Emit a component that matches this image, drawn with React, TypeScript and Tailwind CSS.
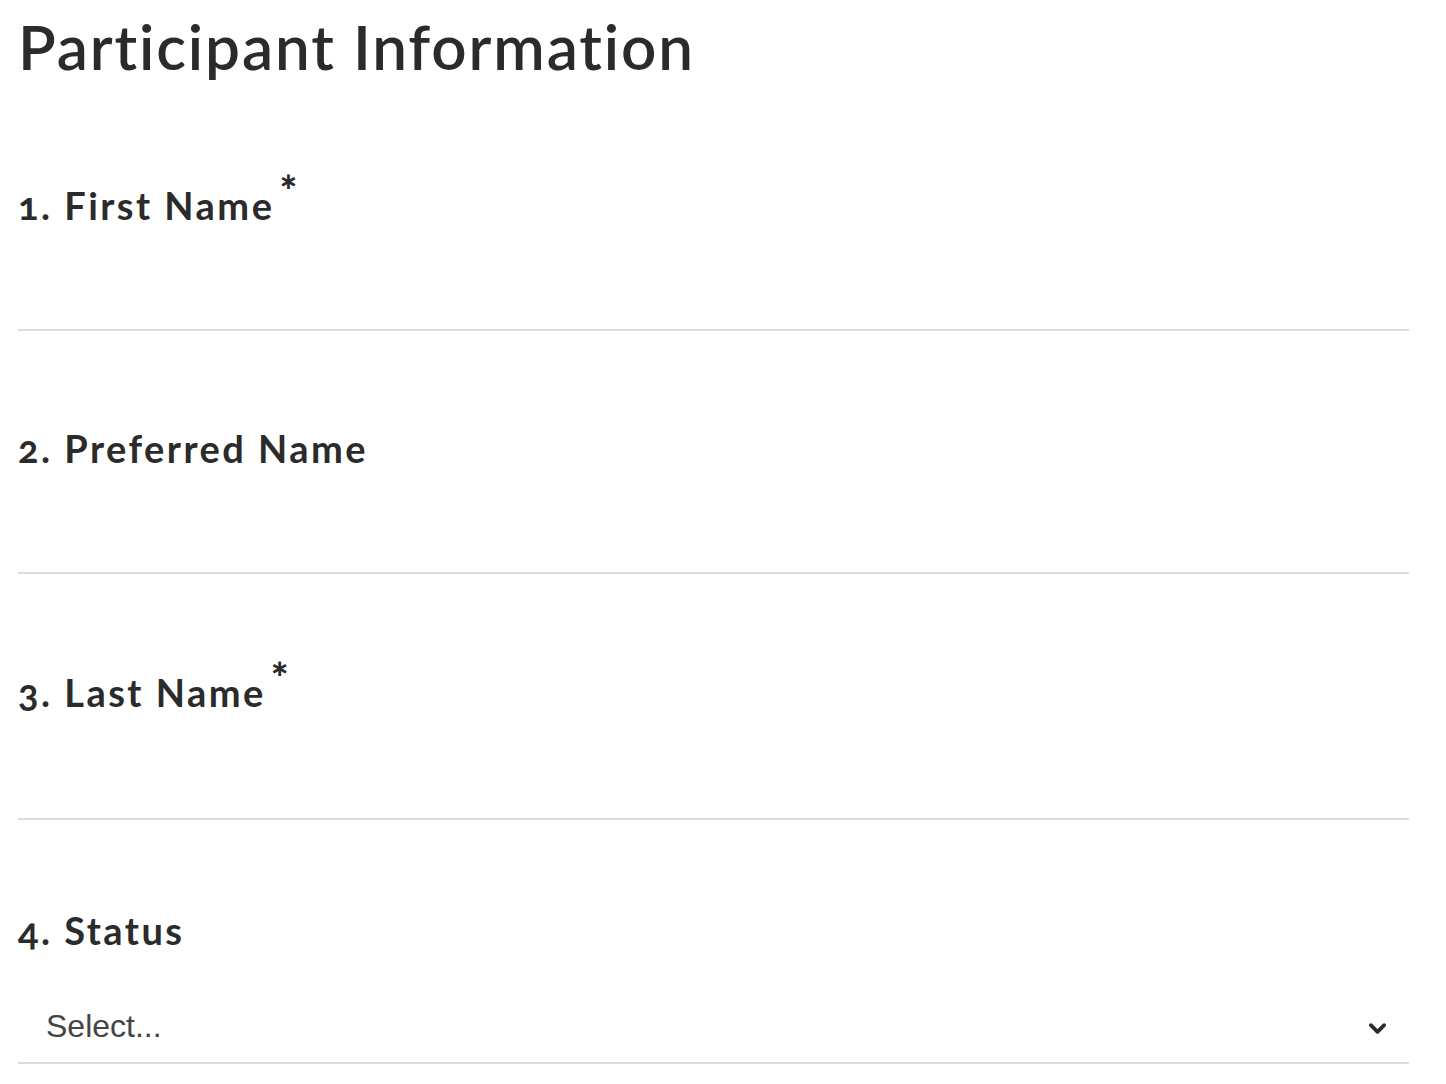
import React from 'react'

interface FieldProps {
  number: number
  label: string
  required?: boolean
  className?: string
  children?: React.ReactNode
}

const Field: React.FC<FieldProps> = ({ number, label, required, className, children }) => (
  <div className={className}>
    <label className="block text-[38px] leading-[48px] font-bold tracking-[0.065em] text-[#2b2b2b] oldstyle-nums">
      {number}. {label}
      {required && (
        <span className="relative -top-[12px] ml-[5px] align-top text-[42px] font-black leading-none tracking-normal">
          *
        </span>
      )}
    </label>
    {children}
  </div>
)

const TextLine: React.FC<{ height: string }> = ({ height }) => (
  <div className={`${height} border-b-2 border-[#dddddd]`} />
)

const App: React.FC = () => {
  return (
    <div className="min-h-[1084px] bg-white pl-[18px] pr-[37px] pt-[15px] font-['Lato',sans-serif]">
      <h1 className="text-[62px] leading-[62px] font-semibold tracking-[0.03em] text-[#2b2b2b]">
        Participant Information
      </h1>

      <Field number={1} label="First Name" required className="pt-[104px]">
        <TextLine height="h-[102px]" />
      </Field>
      <Field number={2} label="Preferred Name" className="pt-[93px]">
        <TextLine height="h-[102px]" />
      </Field>
      <Field number={3} label="Last Name" required className="pt-[94px]">
        <TextLine height="h-[104px]" />
      </Field>
      <Field number={4} label="Status" className="pt-[86px]">
        <div className="flex h-[110px] items-start justify-between border-b-2 border-[#dddddd] pl-[28px] pr-[22px] pt-[54px]">
          <span className="font-['Liberation_Sans',sans-serif] text-[32px] leading-[36px] text-[#444444]">
            Select...
          </span>
          <svg viewBox="0 0 20 13" className="mt-[14px] h-[13px] w-[19px]" fill="none">
            <path
              d="M3 3l7 7 7-7"
              stroke="#2b2b2b"
              strokeWidth="4"
              strokeLinecap="round"
              strokeLinejoin="round"
            />
          </svg>
        </div>
      </Field>
    </div>
  )
}

export default App
